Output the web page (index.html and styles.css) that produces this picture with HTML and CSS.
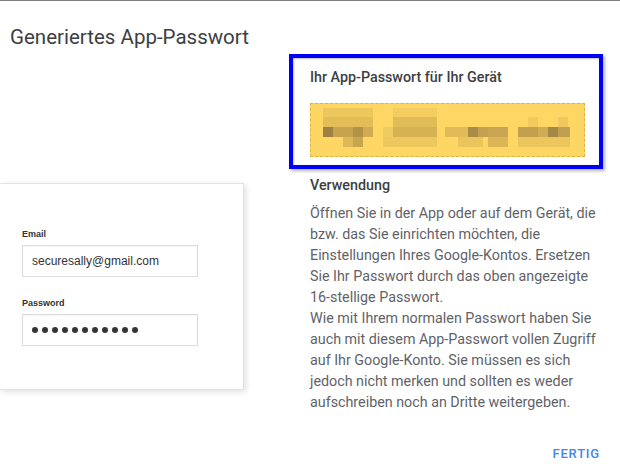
FILE: index.html
```html
<!DOCTYPE html>
<html lang="de">
<head>
<meta charset="utf-8">
<title>Generiertes App-Passwort</title>
<link rel="stylesheet" href="styles.css">
</head>
<body>
<div class="page">
  <h1 class="title">Generiertes App-Passwort</h1>
  <div class="content">
    <div class="left">
      <div class="login-card">
        <div class="field-label">Email</div>
        <div class="field">securesally@gmail.com</div>
        <div class="field-label field-label--second">Password</div>
        <div class="field field--dots">
          <span class="dot"></span><span class="dot"></span><span class="dot"></span><span class="dot"></span><span class="dot"></span><span class="dot"></span><span class="dot"></span><span class="dot"></span><span class="dot"></span><span class="dot"></span><span class="dot"></span>
        </div>
      </div>
    </div>
    <div class="right">
      <div class="highlight">
        <div class="pw-label">Ihr App-Passwort für Ihr Gerät</div>
        <div class="pw-box">
          <svg class="pw-blur" width="273" height="52" viewBox="0 0 273 52" xmlns="http://www.w3.org/2000/svg">
            <rect x="12" y="4" width="50" height="10" fill="#ecc75c"/>
            <rect x="82" y="4" width="44" height="10" fill="#f3cd60"/>
            <rect x="12" y="13" width="50" height="10" fill="#e2bd58"/>
            <rect x="82" y="13" width="44" height="10" fill="#e0bb58"/>
            <rect x="217" y="13" width="10" height="10" fill="#f0ca5e"/>
            <rect x="247" y="13" width="10" height="10" fill="#efc95f"/>
            <rect x="12" y="23" width="10" height="10" fill="#9d8244"/>
            <rect x="22" y="23" width="20" height="10" fill="#c6a44f"/>
            <rect x="42" y="23" width="10" height="10" fill="#b39446"/>
            <rect x="52" y="23" width="10" height="10" fill="#cfac52"/>
            <rect x="72" y="23" width="10" height="10" fill="#f0cb60"/>
            <rect x="82" y="23" width="44" height="10" fill="#d7b255"/>
            <rect x="134" y="23" width="23" height="10" fill="#e0bb57"/>
            <rect x="157" y="23" width="10" height="10" fill="#a98c48"/>
            <rect x="167" y="23" width="10" height="10" fill="#c3a14e"/>
            <rect x="177" y="23" width="20" height="10" fill="#c9a752"/>
            <rect x="207" y="23" width="20" height="10" fill="#c2a04f"/>
            <rect x="227" y="23" width="10" height="10" fill="#d0ad54"/>
            <rect x="237" y="23" width="10" height="10" fill="#a48844"/>
            <rect x="247" y="23" width="12" height="10" fill="#c0a04f"/>
            <rect x="32" y="33" width="10" height="10" fill="#ddb857"/>
            <rect x="42" y="33" width="10" height="10" fill="#c8a650"/>
            <rect x="72" y="33" width="54" height="10" fill="#efc85d"/>
            <rect x="147" y="33" width="25" height="10" fill="#ebc55c"/>
            <rect x="177" y="33" width="20" height="10" fill="#dcb656"/>
            <rect x="207" y="33" width="52" height="10" fill="#ecc65d"/>
          </svg>
        </div>
      </div>
      <div class="usage-title">Verwendung</div>
      <p class="usage-text">Öffnen Sie in der App oder auf dem Gerät, die<br>bzw. das Sie einrichten möchten, die<br>Einstellungen Ihres Google-Kontos. Ersetzen<br>Sie Ihr Passwort durch das oben angezeigte<br>16-stellige Passwort.<br>Wie mit Ihrem normalen Passwort haben Sie<br>auch mit diesem App-Passwort vollen Zugriff<br>auf Ihr Google-Konto. Sie müssen es sich<br>jedoch nicht merken und sollten es weder<br>aufschreiben noch an Dritte weitergeben.</p>
    </div>
  </div>
  <div class="footer"><span class="done">FERTIG</span></div>
</div>
</body>
</html>
```

FILE: styles.css
```css
* { box-sizing: border-box; }

html, body {
  margin: 0;
  padding: 0;
  background: #ffffff;
}

body {
  font-family: Roboto, "Liberation Sans", Arial, sans-serif;
  width: 620px;
  height: 473px;
  overflow: hidden;
}

.page {
  border-top: 1px solid #7d7d7d;
  height: 473px;
}

.title {
  margin: 0;
  padding: 25px 10px 0;
  font-size: 20.5px;
  line-height: 22px;
  font-weight: 400;
  color: #3c4043;
}

.content {
  display: flex;
  align-items: flex-start;
}

.left {
  width: 289px;
  flex: none;
}

.login-card {
  margin-top: 135px;
  width: 244px;
  height: 207px;
  background: #fff;
  border: 1px solid #e3e3e3;
  border-left: none;
  box-shadow: 2px 2px 6px rgba(0, 0, 0, 0.12);
  padding: 45px 0 0 22px;
  font-family: "Liberation Sans", Arial, sans-serif;
}

.field-label {
  font-size: 9px;
  line-height: 11px;
  font-weight: 700;
  color: #333;
  margin-bottom: 5px;
}

.field-label--second {
  margin-top: 21px;
}

.field {
  width: 176px;
  height: 32px;
  border: 1px solid #dcdcdc;
  box-shadow: inset 0 1px 1px rgba(0, 0, 0, 0.04);
  padding: 0 0 0 9px;
  font-size: 12px;
  line-height: 30px;
  color: #333;
}

.field--dots {
  display: flex;
  align-items: center;
  gap: 4px;
}

.dot {
  width: 6px;
  height: 6px;
  border-radius: 50%;
  background: #333;
  flex: none;
}

.right {
  width: 320px;
  flex: none;
  padding-top: 6px;
}

.highlight {
  width: 314px;
  height: 115px;
  border: 4px solid #0000f2;
  box-shadow: inset 1px 1px 2px rgba(0, 0, 0, 0.25), 2px 2px 3px rgba(0, 0, 0, 0.3);
  padding: 11px 0 0 17px;
}

.pw-label {
  font-size: 14.3px;
  line-height: 16px;
  font-weight: 500;
  color: #3c4043;
}

.pw-box {
  margin-top: 18px;
  width: 275px;
  height: 54px;
  background: #fdd663;
  border: 1px dashed #d9b24a;
}

.pw-blur {
  display: block;
}

.usage-title {
  margin-top: 8px;
  padding-left: 21px;
  font-size: 14.3px;
  line-height: 16px;
  font-weight: 500;
  color: #3c4043;
}

.usage-text {
  margin: 10px 0 0;
  padding-left: 21px;
  font-size: 14.3px;
  line-height: 21px;
  color: #5f6368;
  white-space: nowrap;
}

.footer {
  margin-top: 32px;
  padding-right: 20px;
  text-align: right;
  line-height: 16px;
}

.done {
  font-size: 13px;
  font-weight: 500;
  letter-spacing: 0.8px;
  color: #4285f4;
}
```
